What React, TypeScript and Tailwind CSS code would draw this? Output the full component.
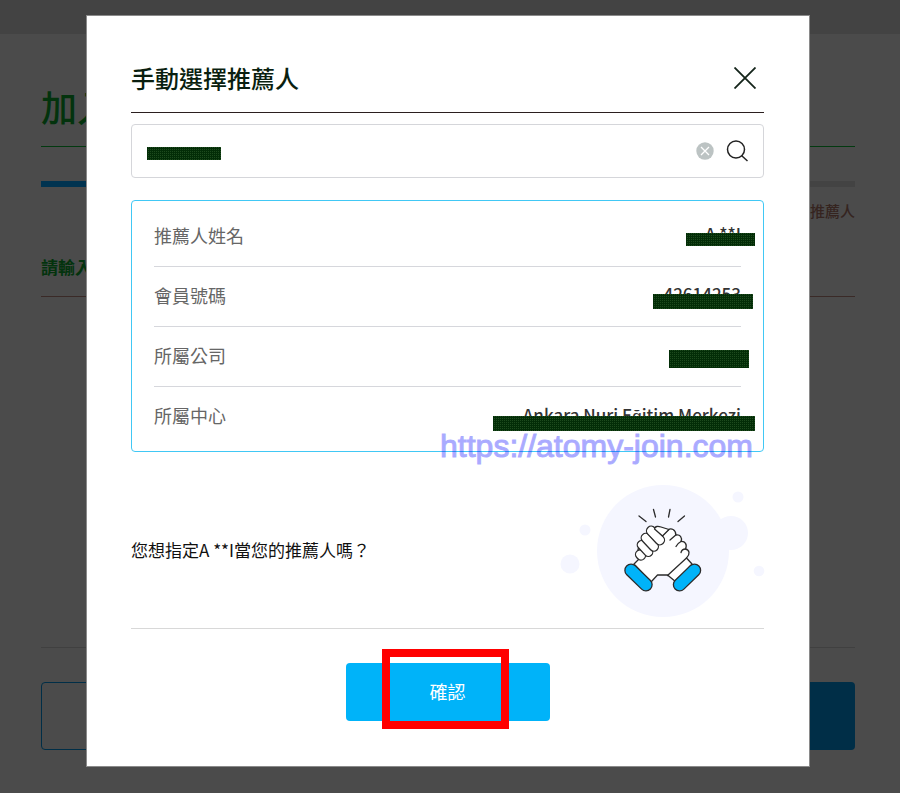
import { ReactNode } from "react";

const Mask = ({ className }: { className: string }) => (
  <span
    aria-hidden="true"
    className={`absolute bg-[conic-gradient(#1d4a1d_25%,#032d07_0)] bg-[length:2px_2px] ${className}`}
  />
);

const InfoRow = ({ label, children }: { label: string; children?: ReactNode }) => (
  <div className="relative flex h-[60px] items-center justify-between border-b border-[#d6d7dc] pb-1 last:border-b-0">
    <dt className="text-[#666666]">{label}</dt>
    <dd className="text-[17px] font-medium text-[#333333]">{children}</dd>
  </div>
);

const HandsIllustration = () => (
  <svg viewBox="10 10 206 134" className="-mr-0.5 w-[206px] shrink-0" fill="none" aria-hidden="true">
    <g fill="#f5f6ff">
      <circle cx="113" cy="76" r="66" />
      <circle cx="181" cy="58" r="17" />
      <circle cx="188" cy="22" r="5.5" />
      <circle cx="35" cy="55" r="5.5" />
      <circle cx="20" cy="89" r="9.5" />
      <circle cx="209" cy="96" r="5.3" />
    </g>
    <g stroke="#2b2b2b" strokeWidth="1.3" strokeLinecap="round" strokeLinejoin="round">
      <path d="M89 41 96 46.500M103.500 34.500 105.500 42M120 34.500 118.500 42M134.500 41 128 46.500" />
      <path
        fill="#fff"
        d="M84 89 90 83 88 74 100 56 106 52 118 55C121 52.500 126 54.500 125.800 60C130 59 132.500 62.500 131 66.500C135 66 137.500 69.500 135.500 74C139.500 75 140.500 79 136.500 83L142 89 126 107 117.500 100H107.500L101 107Z"
      />
      <path d="M136.500 83 117.500 100.500M118 55 111.500 61" />
      <g fill="#fff">
        <rect x="-4.500" y="-5.200" width="9" height="10.400" rx="4.500" transform="translate(90.500 80) rotate(-42)" />
        <rect x="-4.300" y="-9.300" width="8.600" height="18.600" rx="4.300" transform="translate(95 73.500) rotate(-43)" />
        <rect x="-4.500" y="-10.500" width="9" height="21" rx="4.500" transform="translate(99.800 67.300) rotate(-43)" />
        <rect x="-4.700" y="-11" width="9.400" height="22" rx="4.700" transform="translate(105.500 60.500) rotate(-43)" />
      </g>
      <path fill="#fff" d="M104.500 54C105 51 108 51 111 52L119 54.500 112.500 61Z" />
      <path d="M120 65 125.800 60M126 71.500C127 69.500 129 67.500 131 66.500M131 77.500C131.500 75.500 133.500 74 135.500 74" />
      <g fill="#00b3f9">
        <rect x="-16.500" y="-6.200" width="33" height="12.400" rx="6.200" transform="translate(88.500 102.500) rotate(44)" />
        <rect x="-16.500" y="-6.200" width="33" height="12.400" rx="6.200" transform="translate(137 102.500) rotate(-44)" />
      </g>
    </g>
  </svg>
);

const JoinPage = () => (
  <div className="min-h-screen bg-[#4b4b4b] text-[#03330d]">
    <div className="h-[34px] bg-[#434343]" />
    <main className="ml-[41px] mr-[45px]">
      <h1 className="flex h-[113px] items-center border-b border-[#033a10] pt-8 text-4xl font-medium">加入</h1>
      <div className="mt-[34px] flex h-1.5">
        <div className="flex-1 bg-[#003350]" />
        <div className="flex-1 bg-[#434343]" />
      </div>
      <p className="mt-3 text-right text-[15px] font-medium leading-6 text-[#35241f]">推薦人</p>
      <h2 className="mt-[27px] border-b border-[#3a2a27] pb-3 text-[17px] font-bold leading-[34px]">請輸入</h2>
      <div className="mt-[350px] flex gap-4 border-t border-[#404040] pt-[34px]">
        <button aria-label="上一步" className="h-[68px] flex-1 rounded border border-[#002e47]" />
        <button aria-label="下一步" className="h-[68px] flex-1 rounded bg-[#002e47]" />
      </div>
    </main>
  </div>
);

const SponsorDialog = () => (
  <div
    role="dialog"
    aria-labelledby="dialog-title"
    className="absolute left-[86px] right-[90px] top-[15px] border border-[#8a8a8a] bg-white pb-[45px] pl-11 pr-[45px] text-lg text-[#111111]"
  >
    <header className="flex items-center justify-between border-b border-[#2b1f1f] pb-[15px] pt-[43px]">
      <h2 id="dialog-title" className="text-2xl font-medium leading-[38px] text-[#0a1f10]">
        手動選擇推薦人
      </h2>
      <button aria-label="關閉" className="mr-2">
        <svg viewBox="0 0 22 22" className="size-[22px]" stroke="#14241a" strokeWidth="1.8">
          <path d="M.5.5 21.500 21.500M21.500.5.5 21.500" />
        </svg>
      </button>
    </header>

    <div className="relative mt-[11px] flex h-[54px] items-center rounded border border-[#d5d6da] px-[15px]">
      <input aria-label="會員號碼" className="min-w-0 flex-1 outline-none" />
      <Mask className="left-[15px] top-[22px] h-[13px] w-[74px]" />
      <button aria-label="清除">
        <svg viewBox="0 0 18 18" className="size-[18px]">
          <circle cx="9" cy="9" r="8.700" fill="#bcc3c3" />
          <path d="M5 5 13 13M13 5 5 13" stroke="#fff" strokeWidth="1.3" />
        </svg>
      </button>
      <button aria-label="搜尋" className="ml-3">
        <svg viewBox="0 0 22 22" className="size-[22px]" fill="none" stroke="#222" strokeWidth="1.5">
          <circle cx="10" cy="9.500" r="8.500" />
          <path d="M15.500 15.500 21.500 21" />
        </svg>
      </button>
    </div>

    <section className="relative mt-[22px] rounded border border-[#41c8f5] px-[22px] pb-1 pt-1.5">
      <dl>
        <InfoRow label="推薦人姓名">
          A **I
          <Mask className="-right-3.5 top-[26px] h-[13px] w-[69px]" />
        </InfoRow>
        <InfoRow label="會員號碼">
          42614253
          <Mask className="-right-3 top-[27px] h-[15px] w-[100px]" />
        </InfoRow>
        <InfoRow label="所屬公司">
          <Mask className="-right-2 top-[23px] h-[18px] w-20" />
        </InfoRow>
        <InfoRow label="所屬中心">
          Ankara Nuri Eğitim Merkezi
          <Mask className="-right-3.5 top-[29px] h-[15px] w-[262px]" />
        </InfoRow>
      </dl>
      <span className="absolute -bottom-4 right-2.5 font-['Liberation_Sans',sans-serif] text-[32px] leading-[42px] text-[#0000ff] opacity-33 [-webkit-text-stroke:1px_#0000ff]">
        https://atomy-join.com
      </span>
    </section>

    <div className="flex h-[177px] items-center justify-between border-b border-[#d8d8d8] pt-6">
      <p className="pb-1 text-[17px]">您想指定A **I當您的推薦人嗎？</p>
      <HandsIllustration />
    </div>

    <div className="mt-[34px] flex justify-center">
      <div className="relative">
        <button className="h-[58px] w-[204px] rounded bg-[#00b3f9] pb-0.5 text-white">確認</button>
        <div className="pointer-events-none absolute -bottom-2 -top-3.5 left-9 right-[41px] border-8 border-[#ff0000]" />
      </div>
    </div>
  </div>
);

const App = () => {
  return (
    <div lang="zh-TW" className="relative font-['Noto_Sans_CJK_TC',sans-serif]">
      <JoinPage />
      <SponsorDialog />
    </div>
  );
};

export default App;
